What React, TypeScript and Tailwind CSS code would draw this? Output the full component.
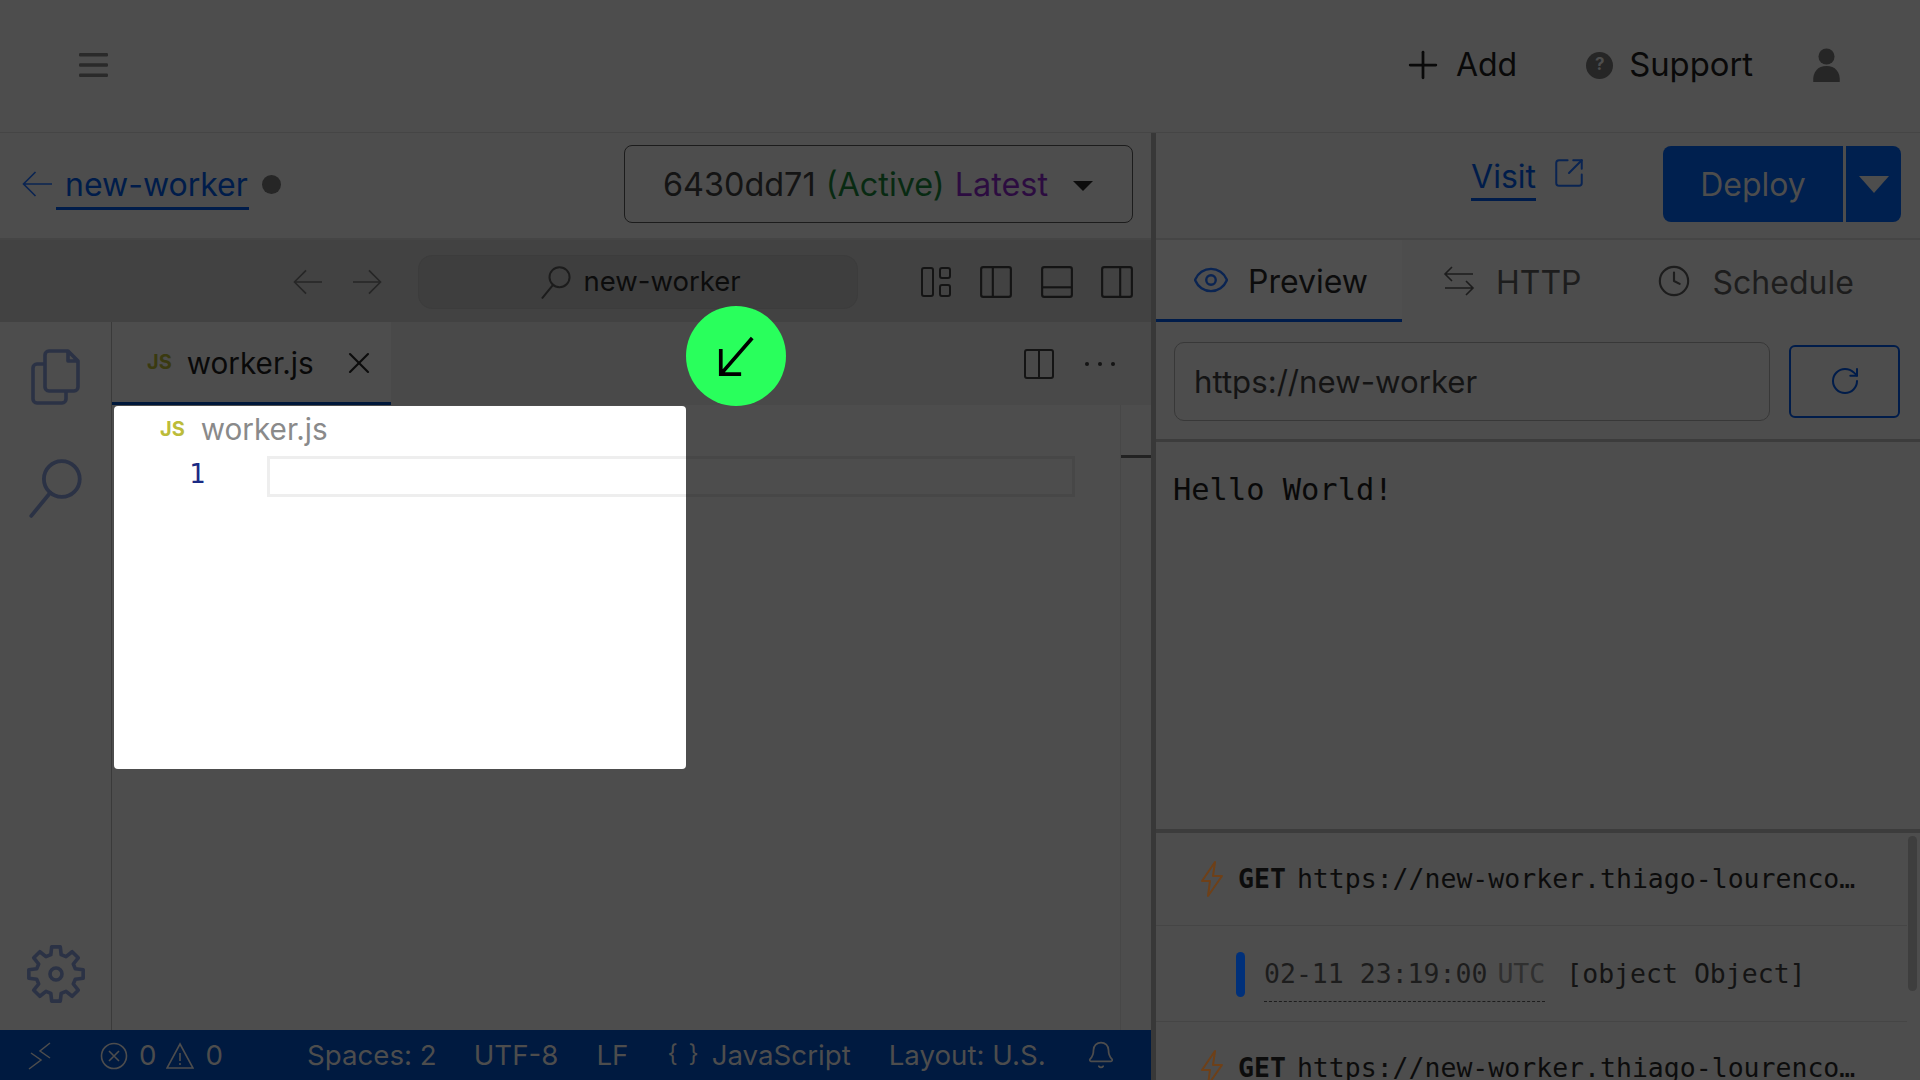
import React from "react";
import { Plus, Eye, Clock, X, RotateCw, Bell, SquareArrowOutUpRight } from "lucide-react";

const sans = "font-['Inter','Liberation_Sans',sans-serif]";
const mono = "font-['DejaVu_Sans_Mono','Liberation_Mono',monospace]";

function Pane({ kind, className }: { kind: "custom" | "left" | "bottom" | "right" | "split"; className?: string }) {
  return (
    <svg viewBox="0 0 32 32" fill="none" stroke="#141414" strokeWidth="2" className={className}>
      {kind === "custom" ? (
        <>
          <rect x="2" y="2" width="11" height="28" rx="2" />
          <rect x="20" y="2" width="10" height="10" rx="2" />
          <rect x="20" y="19" width="10" height="11" rx="2" />
        </>
      ) : (
        <>
          <rect x="2" y="2" width="28" height="28" rx="2" />
          {kind === "left" && <path d="M13 2v28" />}
          {kind === "bottom" && <path d="M2 21h28" />}
          {kind === "right" && <path d="M19 2v28" />}
          {kind === "split" && <path d="M16 2v28" />}
        </>
      )}
    </svg>
  );
}

function Arrow({ dir, color, className }: { dir: "left" | "right"; color: string; className?: string }) {
  return (
    <svg viewBox="0 0 30 26" fill="none" stroke={color} strokeWidth="1.6" className={className}>
      {dir === "left" ? <path d="M30 13H1.5M13.5 1L1.5 13l12 12" /> : <path d="M0 13h28.5M16.5 1l12 12-12 12" />}
    </svg>
  );
}

function Loupe({ className, strokeWidth, color }: { className?: string; strokeWidth: number; color: string }) {
  return (
    <svg viewBox="0 0 50 56" fill="none" stroke={color} strokeWidth={strokeWidth} strokeLinecap="round" className={className}>
      <circle cx="31" cy="19" r="17" />
      <path d="M20 32L2 54" />
    </svg>
  );
}

function Gear({ className }: { className?: string }) {
  const pt = (deg: number, r: number) => {
    const a = (deg * Math.PI) / 180;
    return `${(30 + r * Math.sin(a)).toFixed(2)} ${(30 - r * Math.cos(a)).toFixed(2)}`;
  };
  let d = "";
  for (let i = 0; i < 8; i++) {
    const a = i * 45;
    d += `${i === 0 ? "M" : "L"}${pt(a - 15, 20)}L${pt(a - 9, 27.5)}L${pt(a + 9, 27.5)}L${pt(a + 15, 20)}`;
  }
  return (
    <svg viewBox="0 0 60 60" fill="none" stroke="#2b3245" strokeWidth="3.6" strokeLinejoin="round" className={className}>
      <path d={`${d}Z`} />
      <circle cx="30" cy="30" r="6" />
    </svg>
  );
}

function LogGet() {
  return (
    <div className="flex items-center h-[93px] pl-[44px] border-b border-[#454545]">
      <svg viewBox="0 0 24 38" className="w-[24px] h-[38px] shrink-0" fill="none" stroke="#6e4018" strokeWidth="2" strokeLinejoin="round">
        <path d="M15 2L2 21h8l-2 15 14-20h-9z" />
      </svg>
      <div className={`${mono} ml-[14px] text-[26.5px] whitespace-nowrap text-[#0c0c0c]`}>
        <span className="font-bold">GET</span>
        <span className="ml-[11px]">https://new-worker.thiago-lourenco…</span>
      </div>
    </div>
  );
}

export default function App() {
  return (
    <div className={`${sans} relative w-[1920px] h-[1080px] overflow-hidden bg-[#4d4d4d] text-[#090909]`}>
      {/* Top bar */}
      <header className="flex items-center h-[133px] border-b border-[#454545] pl-[79px] pr-[79px]">
        <svg viewBox="0 0 29 24" className="w-[29px] h-[24px] -mt-[2px]" fill="#2a2a2a">
          <rect y="0" width="29" height="3.4" rx="1.2" />
          <rect y="10.3" width="29" height="3.4" rx="1.2" />
          <rect y="20.6" width="29" height="3.4" rx="1.2" />
        </svg>
        <div className="ml-auto -mt-[2px] flex items-center text-[32px]">
          <Plus className="w-[44px] h-[44px] text-[#090909]" strokeWidth={1.5} />
          <span className="ml-[11px] text-[32px]">Add</span>
          <span className="ml-[69px] flex w-[27px] h-[27px] items-center justify-center rounded-full bg-[#262626] text-[17px] font-bold text-[#4d4d4d]">?</span>
          <span className="ml-[16px] text-[32.8px]">Support</span>
          <svg viewBox="0 0 30 36" className="ml-[59px] w-[29px] h-[34px]" fill="#262626">
            <circle cx="15" cy="9" r="8.5" />
            <path d="M1 36c-1-11 5-17 14-17s15 6 14 17z" />
          </svg>
        </div>
      </header>

      <div className="flex h-[947px]">
        {/* Left column */}
        <div className="flex flex-col w-[1151px] shrink-0">
          <div className="flex items-center h-[107px] border-b-2 border-[#454545] pl-[22px] pr-[18px] pb-[3px]">
            <Arrow dir="left" color="#0a2452" className="w-[30px] h-[26px]" />
            <span className="ml-[4px] mt-[5px] pl-[9px] pr-px h-[46px] leading-[42px] text-[32px] text-[#001c4a] border-b-[3px] border-[#001c4a]">new-worker</span>
            <span className="ml-[13px] w-[19px] h-[19px] rounded-full bg-[#262626]" />
            <div className="ml-auto flex items-center w-[509px] h-[78px] border border-[#1c1c1c] rounded-[8px] pl-[38px] pr-[39px] pt-[3px] text-[32.4px] whitespace-nowrap">
              <span className="text-[#141414]">6430dd71</span>
              <span className="ml-[10px] text-[#082a12]">(Active)</span>
              <span className="ml-[10px] text-[#2c0c40]">Latest</span>
              <span className="ml-auto w-0 h-0 border-x-[10px] border-x-transparent border-t-[10px] border-t-[#0c0c0c]" />
            </div>
          </div>

          <div className="flex items-center h-[82px] bg-[#424242] pl-[293px] pr-[17px] pt-[2px]">
            <Arrow dir="left" color="#262626" className="w-[29px] h-[26px]" />
            <Arrow dir="right" color="#262626" className="ml-[31px] w-[29px] h-[26px]" />
            <div className="ml-[36px] flex items-center justify-center w-[440px] h-[54px] rounded-[14px] border border-[#3c3c3c] bg-[#3e3e3e] pl-[6px] text-[27.5px] text-[#0c0c0c]">
              <Loupe className="w-[30px] h-[33px]" strokeWidth={3.4} color="#1c1c1c" />
              <span className="ml-[12px]">new-worker</span>
            </div>
            <Pane kind="custom" className="ml-auto w-[32px] h-[32px]" />
            <Pane kind="left" className="ml-[27px] w-[34px] h-[34px]" />
            <Pane kind="bottom" className="ml-[27px] w-[34px] h-[34px]" />
            <Pane kind="right" className="ml-[26px] w-[34px] h-[34px]" />
          </div>

          <div className="flex flex-1 min-h-0">
            <aside className="flex flex-col items-center w-[112px] shrink-0 border-r border-[#3a3a3a] pt-[27px] pb-[26px]">
              <svg viewBox="0 0 49 56" fill="none" stroke="#2b3245" strokeWidth="3.6" strokeLinejoin="round" className="w-[49px] h-[56px]">
                <path d="M14 15H6a4 4 0 0 0-4 4v31a4 4 0 0 0 4 4h25a4 4 0 0 0 4-4v-8" />
                <path d="M14 38V6a4 4 0 0 1 4-4h19l10 10v26a4 4 0 0 1-4 4H18a4 4 0 0 1-4-4zM37 2v10h10" />
              </svg>
              <Loupe className="mt-[54px] w-[53px] h-[59px]" strokeWidth={3.6} color="#2b3245" />
              <Gear className="mt-auto w-[60px] h-[60px]" />
            </aside>
            <main className="flex-1 flex flex-col min-w-0">
              <div className="flex items-center h-[83px] bg-[#494949] pr-[36px]">
                <div className="flex items-center w-[279px] h-[83px] bg-[#4d4d4d] border-b-[3px] border-[#00183b] pl-[35px]">
                  <span className="text-[20px] font-bold text-[#3a3a10]">JS</span>
                  <span className="ml-[15px] mt-[2px] text-[29.7px]">worker.js</span>
                  <X className="ml-[27px] mt-[2px] w-[36px] h-[36px] text-[#0c0c0c]" strokeWidth={1.4} />
                </div>
                <Pane kind="split" className="ml-auto w-[32px] h-[32px]" />
                <div className="ml-[30px] flex gap-[9px]">
                  <span className="w-[4px] h-[4px] rounded-full bg-[#141414]" />
                  <span className="w-[4px] h-[4px] rounded-full bg-[#141414]" />
                  <span className="w-[4px] h-[4px] rounded-full bg-[#141414]" />
                </div>
              </div>
              <div className="flex flex-1">
                <div className="flex-1 pt-[51px] pl-[155px] pr-[45px]">
                  <div className="h-[41px] border-[3px] border-[#474747]" />
                </div>
                <div className="w-[31px] border-l border-[#474747] pt-[50px]">
                  <div className="h-[3px] bg-[#222222]" />
                </div>
              </div>
            </main>
          </div>

          <footer className="flex items-center h-[50px] pt-[2px] bg-[#001a40] text-[27.7px] text-[#4d4d4d] whitespace-nowrap">
            <svg viewBox="0 0 24 28" className="ml-[28px] w-[24px] h-[28px]" fill="none" stroke="#4d4d4d" strokeWidth="1.5">
              <path d="M1 27l12-9L3 11M22 1l-10 8 10 7" />
            </svg>
            <svg viewBox="0 0 28 28" className="ml-[48px] w-[28px] h-[28px]" fill="none" stroke="#4d4d4d" strokeWidth="1.6">
              <circle cx="14" cy="14" r="12.5" />
              <path d="M9 9l10 10M19 9L9 19" />
            </svg>
            <span className="ml-[11px]">0</span>
            <svg viewBox="0 0 28 28" className="ml-[10px] w-[28px] h-[28px]" fill="none" stroke="#4d4d4d" strokeWidth="1.6">
              <path d="M14 2L27 26H1zM14 11v8M14 21v2" />
            </svg>
            <span className="ml-[11px]">0</span>
            <span className="ml-[84px]">Spaces: 2</span>
            <span className="ml-[37px]">UTF-8</span>
            <span className="ml-[38px]">LF</span>
            <span className="ml-[39px] -mt-[4px] text-[24px] tracking-[2px]">{"{ }"}</span>
            <span className="ml-[11px]">JavaScript</span>
            <span className="ml-[38px]">Layout: U.S.</span>
            <Bell className="ml-[40px] -mt-[2px] w-[30px] h-[34px]" strokeWidth={1.4} />
          </footer>
        </div>

        <div className="w-[5px] shrink-0 bg-[#383838]" />

        {/* Right column */}
        <div className="flex flex-col flex-1 min-w-0">
          <div className="flex items-center justify-end h-[107px] border-b-2 border-[#454545] pr-[19px] pb-[3px]">
            <span className="-mt-[10px] text-[32px] h-[44px] leading-[40px] text-[#001c4a] border-b-[3px] border-[#001c4a]">Visit</span>
            <SquareArrowOutUpRight className="-mt-[22px] ml-[16px] w-[34px] h-[34px] text-[#0a2452]" strokeWidth={1.4} />
            <div className="ml-[77px] flex w-[238px] h-[76px] rounded-[8px] bg-[#00204f] text-[#4d4d4d]">
              <span className="flex items-center justify-center w-[180px] pt-[2px] text-[32px]">Deploy</span>
              <span className="w-[3px] bg-[#4d4d4d]" />
              <span className="flex flex-1 items-center justify-center">
                <span className="w-0 h-0 border-x-[15px] border-x-transparent border-t-[17px] border-t-[#4d4d4d]" />
              </span>
            </div>
          </div>

          <div className="flex items-center h-[82px] text-[32px] text-[#1d1d1d]">
            <div className="flex items-center w-[246px] h-[82px] bg-[#4f4f4f] border-b-[3px] border-[#001c4a] pl-[36px]">
              <Eye className="w-[38px] h-[38px] text-[#0a2452]" strokeWidth={1.5} />
              <span className="ml-[18px] mt-[4px] text-[#0c0c0c]">Preview</span>
            </div>
            <svg viewBox="0 0 32 32" className="ml-[41px] w-[32px] h-[32px]" fill="none" stroke="#1d1d1d" strokeWidth="1.6">
              <path d="M30 9H2M9 2L2 9l7 7M2 23h28M23 16l7 7-7 7" />
            </svg>
            <span className="ml-[21px] mt-[3px]">HTTP</span>
            <Clock className="ml-[75px] w-[34px] h-[34px] text-[#1d1d1d]" strokeWidth={1.5} />
            <span className="ml-[22px] mt-[3px]">Schedule</span>
          </div>

          <div className="flex items-center h-[120px] border-b-[3px] border-[#3c3c3c] pl-[18px] pr-[20px]">
            <div className="flex items-center w-[597px] h-[79px] mt-[1px] rounded-[10px] border border-[#383838] pl-[19px] pt-[3px] text-[31.2px] text-[#141414]">https://new-worker</div>
            <div className="ml-[19px] mt-[1px] flex items-center justify-center w-[111px] h-[73px] rounded-[6px] border-2 border-[#001c4a]">
              <RotateCw className="w-[32px] h-[32px] text-[#001c4a]" strokeWidth={1.5} />
            </div>
          </div>

          <div className={`${mono} h-[387px] pl-[17px] pt-[30px] text-[30.4px] leading-[36px] text-[#090909]`}>Hello World!</div>

          <div className="flex flex-1 min-h-0 border-t-[4px] border-[#3c3c3c] overflow-hidden">
            <div className="w-[751px] shrink-0">
              <LogGet />
              <div className={`${mono} flex items-start h-[96px] border-b border-[#454545] pl-[80px] pt-[26px] text-[26.5px] whitespace-nowrap`}>
                <span className="w-[9px] h-[45px] rounded-full bg-[#00307a]" />
                <span className="ml-[19px] h-[50px] leading-[44px] border-b border-dashed border-[#1d1d1d] text-[#1d1d1d]">
                  02-11 23:19:00<span className="ml-[10px] text-[#303030]">UTC</span>
                </span>
                <span className="ml-[21px] leading-[44px] text-[#141414]">[object Object]</span>
              </div>
              <LogGet />
            </div>
            <div className="ml-[1px] mt-[3px] w-[9px] h-[155px] rounded-full bg-[#3e3e3e]" />
          </div>
        </div>
      </div>

      {/* Highlighted popup */}
      <div className="absolute left-[114px] top-[406px] w-[572px] h-[363px] rounded-[4px] bg-white">
        <div className="flex items-center h-[46px] pl-[46px]">
          <span className="text-[20px] font-bold text-[#bcbc3a]">JS</span>
          <span className="ml-[16px] text-[29.7px] text-[#8a8a8a]">worker.js</span>
        </div>
        <div className="flex items-start h-[41px] mt-[4px]">
          <span className={`${mono} w-[153px] pl-[75px] text-[27px] leading-[36px] text-[#1a2a84]`}>1</span>
          <div className="flex-1 h-[41px] border-y-[3px] border-l-[3px] border-[#eeeeee]" />
        </div>
      </div>

      <div className="absolute left-[686px] top-[306px] flex items-center justify-center w-[100px] h-[100px] rounded-full bg-[#29ff5c]">
        <svg viewBox="0 0 40 44" className="w-[37px] h-[41px]" fill="none" stroke="#000" strokeWidth="4">
          <path d="M37 2L4 40M3 14v27h22" />
        </svg>
      </div>
    </div>
  );
}
